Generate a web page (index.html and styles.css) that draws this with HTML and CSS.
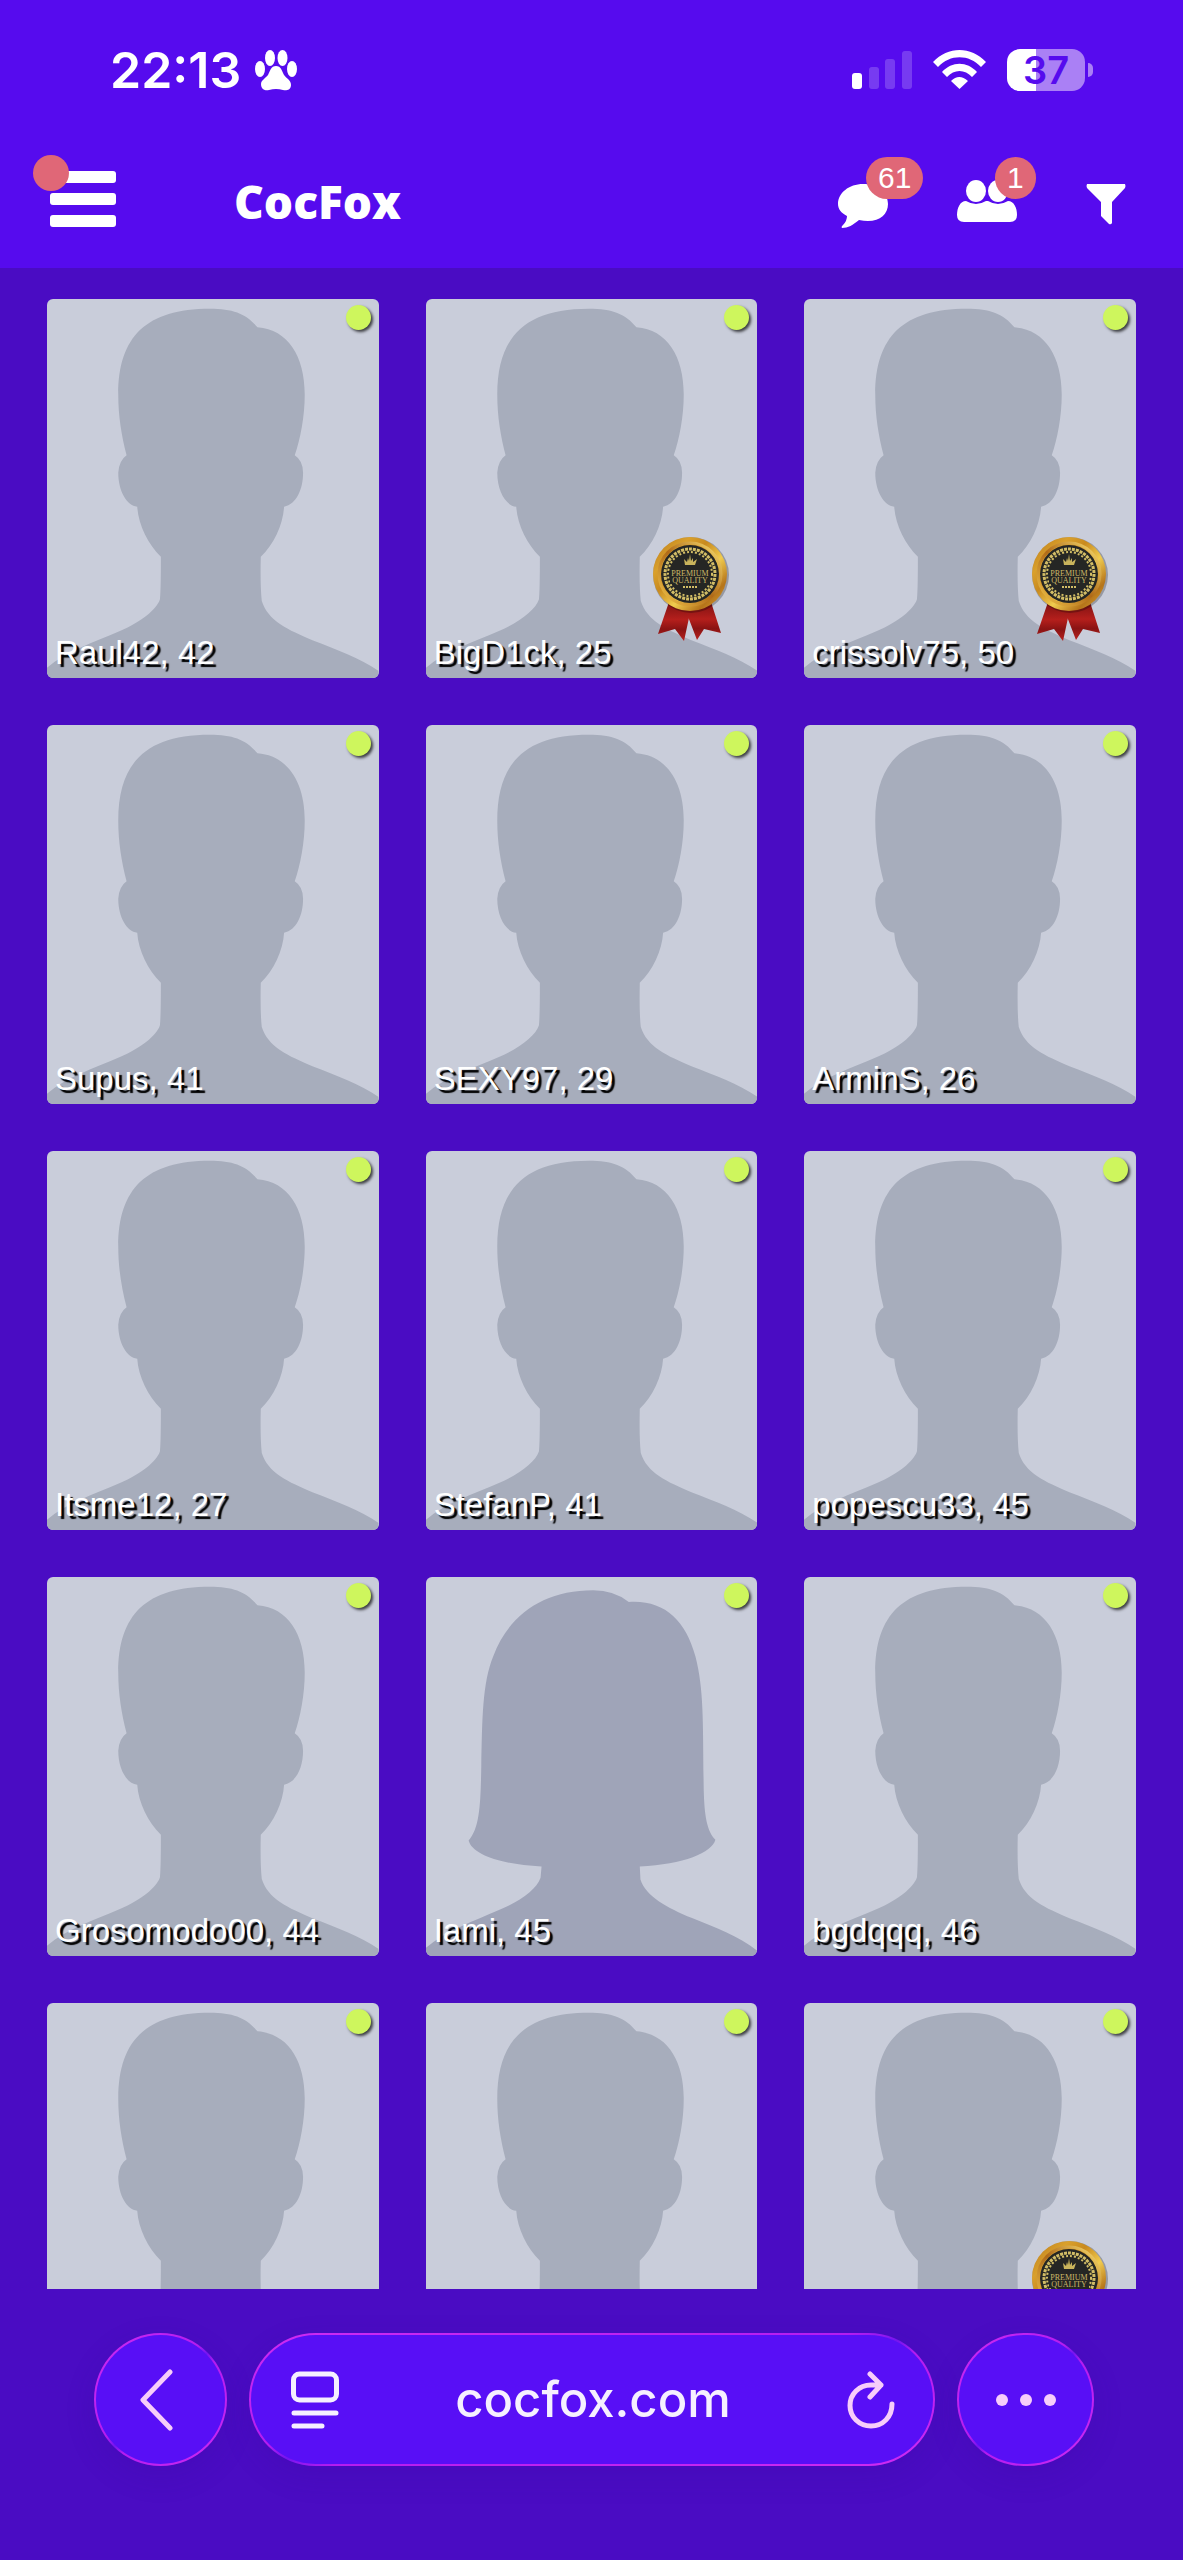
FILE: index.html
```
<!DOCTYPE html>
<html lang="en">
  <head>
    <meta charset="utf-8">
    <meta name="viewport" content="width=device-width, initial-scale=1">
    <title>CocFox</title>
    <link rel="stylesheet" href="styles.css">
  </head>
  <body>
    <!-- shared drawings -->
    <svg class="sprites" width="0" height="0" aria-hidden="true">
      <defs>
        <linearGradient id="gold" x1="0" y1="0" x2="1" y2="1">
          <stop offset="0" stop-color="#b9781a"/>
          <stop offset="0.25" stop-color="#d9a02c"/>
          <stop offset="0.4" stop-color="#c98a1e"/>
          <stop offset="0.6" stop-color="#f0cb4e"/>
          <stop offset="0.8" stop-color="#b5741a"/>
          <stop offset="1" stop-color="#e3b03a"/>
        </linearGradient>
        <linearGradient id="goldInner" x1="1" y1="0" x2="0" y2="1">
          <stop offset="0" stop-color="#fbe374"/>
          <stop offset="0.5" stop-color="#b06a18"/>
          <stop offset="1" stop-color="#f2c64a"/>
        </linearGradient>
        <linearGradient id="ribbon" x1="0" y1="0" x2="0" y2="1">
          <stop offset="0" stop-color="#7c1212"/>
          <stop offset="0.45" stop-color="#b51f1c"/>
          <stop offset="0.7" stop-color="#8a1313"/>
          <stop offset="1" stop-color="#b82220"/>
        </linearGradient>
      </defs>
      <symbol id="man" viewBox="51 58 996 1138" preserveAspectRatio="none">
        <path d="M51 1165C110 1115 190 1090 270 1055C335 1026 380 990 390 960Q393 935 393 832C355 795 325 735 322 682C290 678 265 635 265 580Q267 543 290 527C275 470 265 410 265 345C265 170 350 87 540 87C610 87 650 102 683 143C775 150 825 230 825 345C825 410 812 480 795 527Q820 543 820 580C820 630 800 674 763 682C760 735 732 795 693 832Q691 920 696 965C715 1025 775 1052 850 1083C920 1110 990 1135 1047 1175V1196H51Z"/>
      </symbol>
      <symbol id="woman" viewBox="46 52 996 1138" preserveAspectRatio="none">
        <path d="M46 1165C105 1115 190 1085 265 1052C330 1025 378 990 390 955L393 921C270 915 185 885 174 843C208 805 210 730 212 620C215 480 215 370 248 290C295 165 400 92 548 92Q610 92 655 127C760 120 825 180 855 290C882 395 877 500 880 690C882 770 890 815 915 841C905 880 820 915 688 921L690 960C705 1010 770 1045 845 1076C915 1105 985 1130 1042 1175V1190H46Z"/>
      </symbol>
      <symbol id="medal" viewBox="0 0 90 112">
        <path d="M24 68L13 100L30 95L39 107L47 70Z" fill="url(#ribbon)"/>
        <path d="M66 68L76 99L59 95L52 106L42 80L44 70Z" fill="url(#ribbon)"/>
        <circle cx="46" cy="41" r="38" fill="#000" opacity="0.25"/>
        <circle cx="45" cy="40" r="37" fill="url(#gold)"/>
        <circle cx="45" cy="40" r="31" fill="none" stroke="url(#goldInner)" stroke-width="3"/>
        <circle cx="45" cy="40" r="29" fill="#252624"/>
        <circle cx="45" cy="40" r="25" fill="none" stroke="#d2bd66" stroke-width="3" stroke-dasharray="3 1"/>
        <circle cx="45" cy="40" r="22" fill="none" stroke="#d2bd66" stroke-width="2" stroke-dasharray="2 2"/>
        <path d="M40 31L39 25L42 28L43 24L44 27L45 20L46 27L48 24L48 28L52 25L50 31Z" fill="#c9b45c"/>
        <rect x="25" y="34" width="40" height="16" fill="#252624"/>
        <path d="M38 53H53" stroke="#d2bd66" stroke-width="2" stroke-dasharray="2 1"/>
      </symbol>
    </svg>

    <header class="header">
      <div class="status">
        <span class="time">22:13</span>
        <svg class="paw" width="42" height="42" viewBox="0 0 42 42" aria-hidden="true">
          <g fill="#fff">
            <ellipse cx="15" cy="9" rx="5" ry="8"/>
            <ellipse cx="27.500" cy="9" rx="5" ry="8"/>
            <ellipse cx="5" cy="20" rx="5" ry="8"/>
            <ellipse cx="37" cy="20" rx="5" ry="8"/>
            <path d="M21 17C26 17 27 22 29 26C31 29 36 31 36 36C36 41 31 42 28 41Q21 39 14 41C11 42 6 41 6 35C6 31 11 29 13 26C15 22 16 17 21 17Z"/>
          </g>
        </svg>
        <svg class="signal" width="61" height="42" viewBox="0 0 61 42" aria-hidden="true">
          <g fill="#fff">
            <rect x="0" y="24" width="10" height="16" rx="3"/>
            <rect x="17" y="18" width="10" height="22" rx="3" opacity="0.2"/>
            <rect x="33" y="10" width="10" height="30" rx="3" opacity="0.2"/>
            <rect x="50" y="2" width="10" height="38" rx="3" opacity="0.2"/>
          </g>
        </svg>
        <svg class="wifi" width="53" height="42" viewBox="0 0 53 42" aria-hidden="true">
          <path d="M0 13C15 -3 38 -3 53 13L48 18C36 5 17 5 5 18ZM9 23C19 12 34 12 44 23L39 28C32 20 21 20 14 28ZM18 32Q26 24 35 32L26.500 40Z" fill="#fff"/>
        </svg>
        <div class="battery">37</div>
        <span class="battery-tip"></span>
      </div>

      <nav class="nav">
        <button class="icon-btn" type="button" aria-label="Menu">
          <svg width="66" height="60" viewBox="0 0 66 60">
            <g fill="#fff">
              <rect width="66" height="12" rx="3"/>
              <rect y="22" width="66" height="12" rx="3"/>
              <rect y="44" width="66" height="12" rx="3"/>
            </g>
          </svg>
          <span class="menu-dot"></span>
        </button>
        <a class="logo" href="#">CocFox</a>
        <div class="actions">
          <a class="icon-btn" href="#" aria-label="Messages">
            <svg width="50" height="60" viewBox="0 0 50 60">
              <path d="M25 13C40 13 50 22 50 33C50 45 39 53 21 49C15 54 10 57 4 57C3 56 4 55 5 54Q9 50 9 45C3 42 0 38 0 33C0 22 11 13 25 13Z" fill="#fff"/>
            </svg>
            <span class="badge badge-messages">61</span>
          </a>
          <a class="icon-btn" href="#" aria-label="Visitors">
            <svg width="60" height="60" viewBox="0 0 60 60">
              <g fill="#fff">
                <ellipse cx="19" cy="20" rx="10" ry="11"/>
                <ellipse cx="41" cy="20" rx="10" ry="11"/>
                <path d="M9 30Q19 36 29 30H31Q41 36 51 30C57 30 60 37 60 44Q60 51 53 51H7Q0 51 0 44C0 37 3 30 9 30Z"/>
              </g>
            </svg>
            <span class="badge badge-visitors">1</span>
          </a>
          <button class="icon-btn" type="button" aria-label="Filter">
            <svg width="40" height="60" viewBox="0 0 40 60">
              <path d="M1 13H39Q40 15 39 17L26 31V52Q25 54 23 53L15 45V31L1 17Q0 15 1 13Z" fill="#fff"/>
            </svg>
          </button>
        </div>
      </nav>
    </header>

    <main class="members">
      <a class="card" href="#">
        <svg class="photo"><use href="#man"/></svg>
        <span class="online"></span>
        <span class="name">Raul42, 42</span>
      </a>
      <a class="card" href="#">
        <svg class="photo"><use href="#man"/></svg>
        <svg class="medal" viewBox="0 0 90 112">
          <use href="#medal"/>
          <text x="45" y="42">PREMIUM</text>
          <text x="45" y="49">QUALITY</text>
        </svg>
        <span class="online"></span>
        <span class="name">BigD1ck, 25</span>
      </a>
      <a class="card" href="#">
        <svg class="photo"><use href="#man"/></svg>
        <svg class="medal" viewBox="0 0 90 112">
          <use href="#medal"/>
          <text x="45" y="42">PREMIUM</text>
          <text x="45" y="49">QUALITY</text>
        </svg>
        <span class="online"></span>
        <span class="name">crissolv75, 50</span>
      </a>
      <a class="card" href="#">
        <svg class="photo"><use href="#man"/></svg>
        <span class="online"></span>
        <span class="name">Supus, 41</span>
      </a>
      <a class="card" href="#">
        <svg class="photo"><use href="#man"/></svg>
        <span class="online"></span>
        <span class="name">SEXY97, 29</span>
      </a>
      <a class="card" href="#">
        <svg class="photo"><use href="#man"/></svg>
        <span class="online"></span>
        <span class="name">ArminS, 26</span>
      </a>
      <a class="card" href="#">
        <svg class="photo"><use href="#man"/></svg>
        <span class="online"></span>
        <span class="name">Itsme12, 27</span>
      </a>
      <a class="card" href="#">
        <svg class="photo"><use href="#man"/></svg>
        <span class="online"></span>
        <span class="name">StefanP, 41</span>
      </a>
      <a class="card" href="#">
        <svg class="photo"><use href="#man"/></svg>
        <span class="online"></span>
        <span class="name">popescu33, 45</span>
      </a>
      <a class="card" href="#">
        <svg class="photo"><use href="#man"/></svg>
        <span class="online"></span>
        <span class="name">Grosomodo00, 44</span>
      </a>
      <a class="card" href="#">
        <svg class="photo photo-woman"><use href="#woman"/></svg>
        <span class="online"></span>
        <span class="name">Iami, 45</span>
      </a>
      <a class="card" href="#">
        <svg class="photo"><use href="#man"/></svg>
        <span class="online"></span>
        <span class="name">bgdqqq, 46</span>
      </a>
      <a class="card" href="#" aria-label="Member">
        <svg class="photo"><use href="#man"/></svg>
        <span class="online"></span>
      </a>
      <a class="card" href="#" aria-label="Member">
        <svg class="photo"><use href="#man"/></svg>
        <span class="online"></span>
      </a>
      <a class="card" href="#" aria-label="Member">
        <svg class="photo"><use href="#man"/></svg>
        <svg class="medal" viewBox="0 0 90 112">
          <use href="#medal"/>
          <text x="45" y="42">PREMIUM</text>
          <text x="45" y="49">QUALITY</text>
        </svg>
        <span class="online"></span>
      </a>
    </main>

    <footer class="toolbar">
      <button class="glass back" type="button" aria-label="Back">
        <svg width="34" height="62" viewBox="0 0 34 62">
          <path d="M30 3L3 31L30 59" fill="none" stroke="#f7cdfa" stroke-width="5" stroke-linecap="round" stroke-linejoin="round"/>
        </svg>
      </button>
      <div class="glass address">
        <button class="icon-btn" type="button" aria-label="Page settings">
          <svg width="48" height="58" viewBox="0 0 48 58">
            <g fill="none" stroke="#f6f0ff" stroke-width="5" stroke-linecap="round">
              <rect x="2.500" y="3" width="43" height="26" rx="6"/>
              <path d="M3 42H45M3 55H31"/>
            </g>
          </svg>
        </button>
        <a class="url" href="#">cocfox.com</a>
        <button class="icon-btn" type="button" aria-label="Reload">
          <svg width="48" height="58" viewBox="0 0 48 58">
            <path d="M34 14H24C12 14 3 23 3 34.500C3 46 12 55 24 55C36 55 45 46 45 33M23 3L34 14L23 26" fill="none" stroke="#f7cdfa" stroke-width="5" stroke-linecap="round" stroke-linejoin="round"/>
          </svg>
        </button>
      </div>
      <button class="glass more" type="button" aria-label="More">
        <svg width="62" height="14" viewBox="0 0 62 14">
          <g fill="#f7cdfa">
            <circle cx="7" cy="7" r="6"/>
            <circle cx="31" cy="7" r="6"/>
            <circle cx="55" cy="7" r="6"/>
          </g>
        </svg>
      </button>
    </footer>
  </body>
</html>
```

FILE: styles.css
```
* {
  box-sizing: border-box;
}

body {
  display: flex;
  flex-direction: column;
  height: 100vh;
  margin: 0;
  background-color: #4a0cc3;
  color: #fff;
  font-family: "Liberation Sans", Arial, sans-serif;
}

svg {
  display: block;
}

a {
  color: inherit;
  text-decoration: none;
}

button {
  padding: 0;
  border: 0;
  background: none;
  color: inherit;
  cursor: pointer;
}

.sprites {
  position: absolute;
}

/* header */
.header {
  background-color: #560bee;
}

.status {
  display: flex;
  align-items: center;
  height: 94px;
  padding: 46px 90px 0 110px;
  font-family: Inter, sans-serif;
}

.time {
  font-size: 50px;
  font-weight: 600;
  line-height: 48px;
}

.paw {
  margin-left: 14px;
}

.signal {
  margin-left: auto;
}

.wifi {
  margin-left: 20px;
}

.battery {
  width: 78px;
  margin-left: 21px;
  border-radius: 13px;
  background: linear-gradient(to right, #fff 37%, #aa80f5 37%);
  color: #560bee;
  font-size: 38px;
  font-weight: 600;
  line-height: 42px;
  text-align: center;
}

.battery-tip {
  width: 5px;
  height: 14px;
  margin-left: 3px;
  border-radius: 0 5px 5px 0;
  background-color: #aa80f5;
}

.nav {
  display: flex;
  align-items: center;
  padding: 77px 57px 37px 50px;
}

.icon-btn {
  position: relative;
  flex: none;
}

.menu-dot {
  position: absolute;
  top: -16px;
  left: -17px;
  width: 36px;
  height: 36px;
  border-radius: 50%;
  background-color: #e06777;
}

.logo {
  margin-left: 118px;
  font-family: "Open Sans", sans-serif;
  font-size: 46px;
  font-weight: 800;
  line-height: 60px;
}

.actions {
  display: flex;
  gap: 69px;
  margin-left: auto;
}

.badge {
  position: absolute;
  top: -14px;
  height: 42px;
  padding: 0 12px;
  border-radius: 21px;
  background-color: #e06777;
  font-size: 30px;
  line-height: 42px;
}

.badge-messages {
  left: 28px;
}

.badge-visitors {
  left: 38px;
}

/* member grid */
.members {
  display: grid;
  grid-template-columns: repeat(3, 1fr);
  flex: 1;
  align-content: start;
  gap: 47px;
  min-height: 0;
  padding: 31px 47px 0;
  overflow: hidden;
}

.card {
  position: relative;
  border-radius: 6px;
  background-color: #c9cdda;
}

.photo {
  width: 100%;
  height: auto;
  aspect-ratio: 7 / 8;
  border-radius: 6px;
  fill: #a7adbc;
}

.photo-woman {
  fill: #9fa4b8;
}

.medal {
  position: absolute;
  right: 22px;
  bottom: 32px;
  width: 90px;
  height: 112px;
}

.medal text {
  fill: #cdb968;
  font-family: "Liberation Serif", serif;
  font-size: 8px;
  text-anchor: middle;
}

.online {
  position: absolute;
  top: 6px;
  right: 8px;
  width: 25px;
  height: 25px;
  border-radius: 50%;
  background-color: #cef65d;
  box-shadow: 2px 2px 3px rgba(0, 0, 0, 0.7);
}

.name {
  position: absolute;
  bottom: 6px;
  left: 8px;
  font-size: 33px;
  line-height: 38px;
  text-shadow: 3px 3px 1px #000;
  white-space: nowrap;
}

/* browser toolbar */
.toolbar {
  display: flex;
  gap: 22px;
  padding: 44px 89px 94px 94px;
}

.glass {
  display: flex;
  justify-content: center;
  align-items: center;
  height: 133px;
  border: 2px solid transparent;
  border-radius: 67px;
  background:
    linear-gradient(#580ff6, #580ff6) padding-box,
    linear-gradient(to bottom right, #cf2bf2, #b51cf0 44%, #7415f0 50%, #b51cf0 56%, #cf2bf2) border-box;
  box-shadow: 0 10px 30px rgba(50, 0, 140, 0.15);
}

.back {
  width: 133px;
  padding-right: 8px;
}

.more {
  width: 137px;
}

.address {
  flex: 1;
  justify-content: space-between;
  padding: 0 38px 0 40px;
}

.url {
  color: #f6f0ff;
  font-family: Inter, sans-serif;
  font-size: 49px;
  font-weight: 500;
  line-height: 60px;
}
```
